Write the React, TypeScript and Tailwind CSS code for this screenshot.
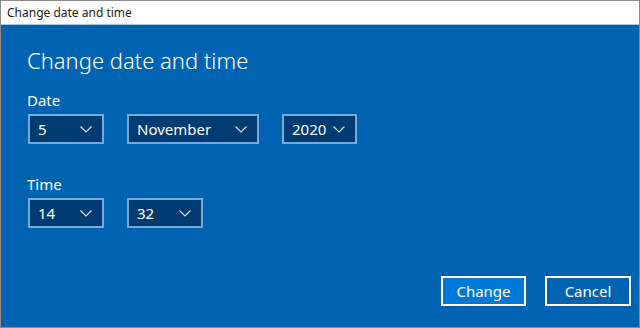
import { ReactNode } from "react"

const font = { fontFamily: '"Noto Sans", "Open Sans", sans-serif' }

function Chevron() {
  return (
    <svg width="12" height="7" viewBox="0 0 12 7" fill="none">
      <polyline points="0.5,0.5 6,6 11.5,0.5" stroke="#dbe8f5" strokeWidth="1.1" />
    </svg>
  )
}

function Select({ value, width }: { value: string; width: string }) {
  return (
    <div
      className={`${width} flex h-[30px] items-center justify-between border-2 border-[#77a9dc] bg-[#003b71] pl-[8px] pr-[10px] text-[15px] text-white`}
    >
      <span>{value}</span>
      <Chevron />
    </div>
  )
}

function Label({ children }: { children: ReactNode }) {
  return <div className="text-[15px] leading-[20px] text-white">{children}</div>
}

export default function App() {
  return (
    <div style={font} className="flex h-[328px] w-[640px] flex-col border border-[#8a8a8a]">
      <div className="flex h-[24px] items-center border-b border-[#a9c6e3] bg-white pl-[6px] text-[12px] text-[#1a1a1a]">
        Change date and time
      </div>
      <div className="flex flex-1 flex-col bg-[#0063b1] px-[26px] pt-[20px]">
        <h1 className="text-[22px] leading-[30px] font-light text-white">Change date and time</h1>

        <div className="mt-[15px]">
          <Label>Date</Label>
          <div className="mt-[4px] ml-[1px] flex gap-[23px]">
            <Select value="5" width="w-[76px]" />
            <Select value="November" width="w-[132px]" />
            <Select value="2020" width="w-[75px]" />
          </div>
        </div>

        <div className="mt-[30px]">
          <Label>Time</Label>
          <div className="mt-[4px] ml-[1px] flex gap-[23px]">
            <Select value="14" width="w-[76px]" />
            <Select value="32" width="w-[76px]" />
          </div>
        </div>

        <div className="mt-auto mb-[21px] flex justify-end gap-[19px]">
          <button className="h-[30px] w-[85px] border-2 border-white bg-[#0078d7] text-[15px] text-white">
            Change
          </button>
          <button className="mr-[-18px] h-[30px] w-[86px] border-2 border-white bg-[#0063b1] text-[15px] text-white">
            Cancel
          </button>
        </div>
      </div>
    </div>
  )
}
